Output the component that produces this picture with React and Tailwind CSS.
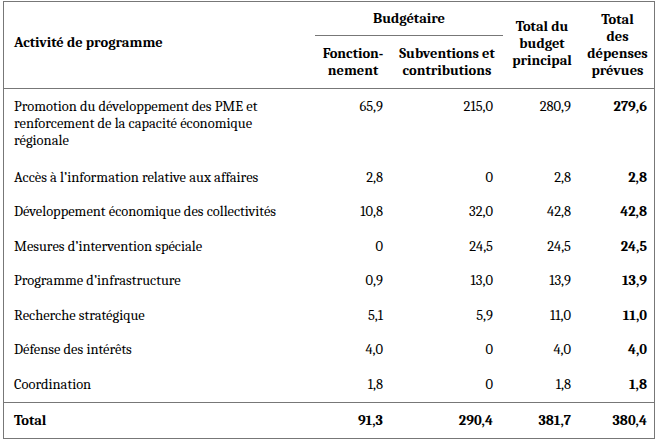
import React from 'react';

// Planned spending by program activity (millions of dollars)
const rows = [
  {
    label: 'Promotion du développement des PME et renforcement de la capacité économique régionale',
    values: ['65,9', '215,0', '280,9', '279,6'],
  },
  { label: 'Accès à l’information relative aux affaires', values: ['2,8', '0', '2,8', '2,8'] },
  { label: 'Développement économique des collectivités', values: ['10,8', '32,0', '42,8', '42,8'] },
  { label: 'Mesures d’intervention spéciale', values: ['0', '24,5', '24,5', '24,5'] },
  { label: 'Programme d’infrastructure', values: ['0,9', '13,0', '13,9', '13,9'] },
  { label: 'Recherche stratégique', values: ['5,1', '5,9', '11,0', '11,0'] },
  { label: 'Défense des intérêts', values: ['4,0', '0', '4,0', '4,0'] },
  { label: 'Coordination', values: ['1,8', '0', '1,8', '1,8'] },
];

const total = ['91,3', '290,4', '381,7', '380,4'];

const cols = 'grid grid-cols-[311px_76px_112px_78px_73px]';

// thin grey rule
const Rule = () => <div className="h-[1px] bg-[#777777]" />;

const App = () => {
  return (
    <div className="min-h-[444px] bg-white pt-px font-serif [font-family:Liberation_Serif,Times_New_Roman,serif] text-[14.5px] leading-[17px] text-black">
      <div className="ml-[3px] w-[652px] bg-[#777777] p-[1px]">
        <div className="bg-white">
          {/* header */}
          <div className={`${cols} grid-rows-[34px_52px] font-bold`}>
            <div className="row-span-2 flex items-center pl-[10px] pb-[6px]">Activité de programme</div>
            <div className="col-span-2 flex flex-col">
              <div className="flex flex-1 items-center justify-center">Budgétaire</div>
              <Rule />
            </div>
            <div className="row-span-2 flex items-center justify-center pb-[4px] text-center">
              Total du
              <br />
              budget
              <br />
              principal
            </div>
            <div className="row-span-2 flex items-center justify-center text-center">
              Total
              <br />
              des
              <br />
              dépenses
              <br />
              prévues
            </div>
            <div className="flex items-center justify-center text-center">
              Fonction-
              <br />
              nement
            </div>
            <div className="flex items-center justify-center text-center">
              Subventions et
              <br />
              contributions
            </div>
          </div>
          <Rule />

          {/* body */}
          {rows.map((row, i) => (
            <div key={row.label} className={`${cols} ${i === 0 ? 'pt-[9px] pb-[11px]' : 'py-[8.75px]'}`}>
              <div className="pl-[10px] pr-[12px]">{row.label}</div>
              <div className="pr-[8px] text-right">{row.values[0]}</div>
              <div className="pr-[10px] text-right">{row.values[1]}</div>
              <div className="pr-[10px] text-right">{row.values[2]}</div>
              <div className="pr-[7px] text-right font-bold">{row.values[3]}</div>
            </div>
          ))}

          {/* total */}
          <Rule />
          <div className={`${cols} py-[9px] font-bold`}>
            <div className="pl-[10px]">Total</div>
            <div className="pr-[8px] text-right">{total[0]}</div>
            <div className="pr-[10px] text-right">{total[1]}</div>
            <div className="pr-[10px] text-right">{total[2]}</div>
            <div className="pr-[7px] text-right">{total[3]}</div>
          </div>
        </div>
      </div>
    </div>
  );
};

export default App;
